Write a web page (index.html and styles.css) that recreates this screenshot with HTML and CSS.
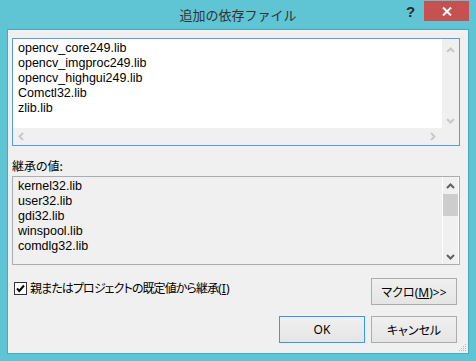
FILE: index.html
```html
<!DOCTYPE html>
<html lang="ja">
<head>
  <meta charset="UTF-8" />
  <title>追加の依存ファイル</title>
  <link rel="stylesheet" href="styles.css">
</head>
<body>
  <div class="window">
    <!-- Title bar -->
    <div class="titlebar">
      <div class="title">追加の依存ファイル</div>
      <div class="help">?</div>
      <div class="close">
        <svg width="10" height="9" viewBox="0 0 10 9">
          <path d="M1 0.5 L9 8.5 M9 0.5 L1 8.5" stroke="#fff" stroke-width="2" />
        </svg>
      </div>
    </div>

    <div class="client">
      <!-- Editable list -->
      <div class="listbox focus">
        <div class="list-main">
          <div class="lines">
            <div>opencv_core249.lib</div>
            <div>opencv_imgproc249.lib</div>
            <div>opencv_highgui249.lib</div>
            <div>Comctl32.lib</div>
            <div>zlib.lib</div>
          </div>
          <div class="vscroll">
            <svg class="arrow" width="9" height="6" viewBox="0 0 9 6"><path d="M1 5 L4.5 1.5 L8 5" class="chev off" /></svg>
            <div class="track"></div>
            <svg class="arrow" width="9" height="6" viewBox="0 0 9 6"><path d="M1 1 L4.5 4.5 L8 1" class="chev off" /></svg>
          </div>
        </div>
        <div class="hscroll">
          <svg class="arrow" width="6" height="9" viewBox="0 0 6 9"><path d="M5 1 L1.5 4.5 L5 8" class="chev off" /></svg>
          <div class="track"></div>
          <svg class="arrow" width="6" height="9" viewBox="0 0 6 9"><path d="M1 1 L4.5 4.5 L1 8" class="chev off" /></svg>
          <div class="corner"></div>
        </div>
      </div>

      <div class="caption">継承の値:</div>

      <!-- Inherited list (read only) -->
      <div class="listbox readonly">
        <div class="list-main">
          <div class="lines">
            <div>kernel32.lib</div>
            <div>user32.lib</div>
            <div>gdi32.lib</div>
            <div>winspool.lib</div>
            <div>comdlg32.lib</div>
          </div>
          <div class="vscroll active">
            <svg class="arrow" width="9" height="6" viewBox="0 0 9 6"><path d="M1 5 L4.5 1.5 L8 5" class="chev" /></svg>
            <div class="track"><div class="thumb"></div></div>
            <svg class="arrow" width="9" height="6" viewBox="0 0 9 6"><path d="M1 1 L4.5 4.5 L8 1" class="chev" /></svg>
          </div>
        </div>
      </div>

      <div class="option-row">
        <label class="check">
          <svg width="13" height="13" viewBox="0 0 13 13">
            <rect x="0.5" y="0.5" width="12" height="12" fill="#fff" stroke="#333" />
            <path d="M3 6.5 L5.3 9 L10 3.5" fill="none" stroke="#000" stroke-width="2" />
          </svg>
          <span><span class="tight">親またはプロジェクトの既定値から継承</span>(<u>I</u>)</span>
        </label>
        <button class="btn">マクロ(<u>M</u>)&gt;&gt;</button>
      </div>

      <div class="button-row">
        <button class="btn default">OK</button>
        <button class="btn">キャンセル</button>
      </div>

      <svg class="grip" width="8" height="8" viewBox="0 0 8 8">
        <rect x="6" y="0" width="1" height="1" fill="#b5b5b5" />
        <rect x="4" y="2" width="1" height="1" fill="#b5b5b5" />
        <rect x="6" y="2" width="1" height="1" fill="#b5b5b5" />
        <rect x="2" y="4" width="1" height="1" fill="#b5b5b5" />
        <rect x="4" y="4" width="1" height="1" fill="#b5b5b5" />
        <rect x="6" y="4" width="1" height="1" fill="#b5b5b5" />
        <rect x="0" y="6" width="1" height="1" fill="#b5b5b5" />
        <rect x="2" y="6" width="1" height="1" fill="#b5b5b5" />
        <rect x="4" y="6" width="1" height="1" fill="#b5b5b5" />
        <rect x="6" y="6" width="1" height="1" fill="#b5b5b5" />
      </svg>
    </div>
  </div>
</body>
</html>
```

FILE: styles.css
```css
/* Windows 8 style dialog */
body {
  margin: 0;
  background: #5fc4d4;
  font-family: "Noto Sans", "Noto Sans CJK JP", sans-serif;
  font-size: 12px;
  color: #000;
}

.window {
  width: 476px;
  height: 361px;
  background: #5fc4d4;
  box-sizing: border-box;
  padding: 0 7px;
}

.titlebar {
  position: relative;
  height: 29px;
  margin: 0 -7px;
}

.title {
  text-align: center;
  font-family: "Noto Sans CJK JP", sans-serif;
  font-size: 13px;
  line-height: 30px;
  color: #333;
}

.help {
  position: absolute;
  left: 406px;
  top: 3px;
  font-family: "Liberation Sans", sans-serif;
  font-weight: bold;
  font-size: 15px;
  color: #2a2a2a;
}

.close {
  position: absolute;
  left: 424px;
  top: 1px;
  width: 45px;
  height: 20px;
  background: #c75050;
  display: flex;
  align-items: center;
  justify-content: center;
}

.client {
  position: relative;
  height: 325px;
  box-sizing: border-box;
  border: 1px solid #4aa9b9;
  background: #f0f0f0;
  padding: 8px 8px 0 4px;
  font-feature-settings: "palt";
}

/* List boxes */
.listbox {
  border: 1px solid #abadb3;
  display: flex;
  flex-direction: column;
}

.listbox.focus {
  border-color: #569de5;
  height: 108px;
  box-sizing: border-box;
  background: #fff;
}

.listbox.readonly {
  height: 89px;
  box-sizing: border-box;
  background: #f0f0f0;
  margin-top: 3px;
}

.list-main {
  flex: 1;
  display: flex;
  min-height: 0;
}

.lines {
  flex: 1;
  padding: 2px 5px;
  font-family: "Liberation Sans", sans-serif;
  font-size: 12.5px;
  line-height: 15px;
}

.vscroll {
  width: 17px;
  background: #f0f0f0;
  display: flex;
  flex-direction: column;
  align-items: center;
  padding: 8px 0 4px;
  box-sizing: border-box;
}

.vscroll.active {
  border-left: 1px solid #fff;
  border-right: 1px solid #fff;
  width: 17px;
  padding: 6px 0 4px;
}

.vscroll .track {
  flex: 1;
  align-self: stretch;
  padding-top: 5px;
}

.thumb {
  height: 22px;
  background: #cdcdcd;
}

.hscroll {
  height: 17px;
  background: #f0f0f0;
  display: flex;
  align-items: center;
  padding-left: 5px;
}

.hscroll .track {
  flex: 1;
}

.hscroll .corner {
  width: 17px;
  margin-left: 6px;
}

.chev {
  fill: none;
  stroke: #606060;
  stroke-width: 2;
}

.chev.off {
  stroke: #c8c8c8;
}

.caption {
  margin-top: 12px;
  line-height: 15px;
  font-family: "Noto Sans CJK JP", sans-serif;
}

/* Bottom controls */
.option-row {
  margin-top: 13px;
  display: flex;
  justify-content: space-between;
  align-items: flex-start;
  padding-right: 3px;
}

.check {
  display: flex;
  align-items: center;
  gap: 3px;
  margin-top: 3px;
  margin-left: 2px;
  line-height: 15px;
}

.check .tight {
  letter-spacing: -0.9px;
}

.btn {
  width: 86px;
  height: 27px;
  border: 1px solid #acacac;
  background: linear-gradient(#f0f0f0, #e5e5e5);
  font-family: "Noto Sans", "Noto Sans CJK JP", sans-serif;
  font-size: 12px;
  font-feature-settings: "palt";
  color: #000;
  padding: 0;
}

.btn.default {
  border-color: #3399ff;
}

.button-row {
  margin-top: 11px;
  display: flex;
  justify-content: flex-end;
  gap: 6px;
  padding-right: 3px;
}

.grip {
  position: absolute;
  right: 1px;
  bottom: 1px;
}
```
